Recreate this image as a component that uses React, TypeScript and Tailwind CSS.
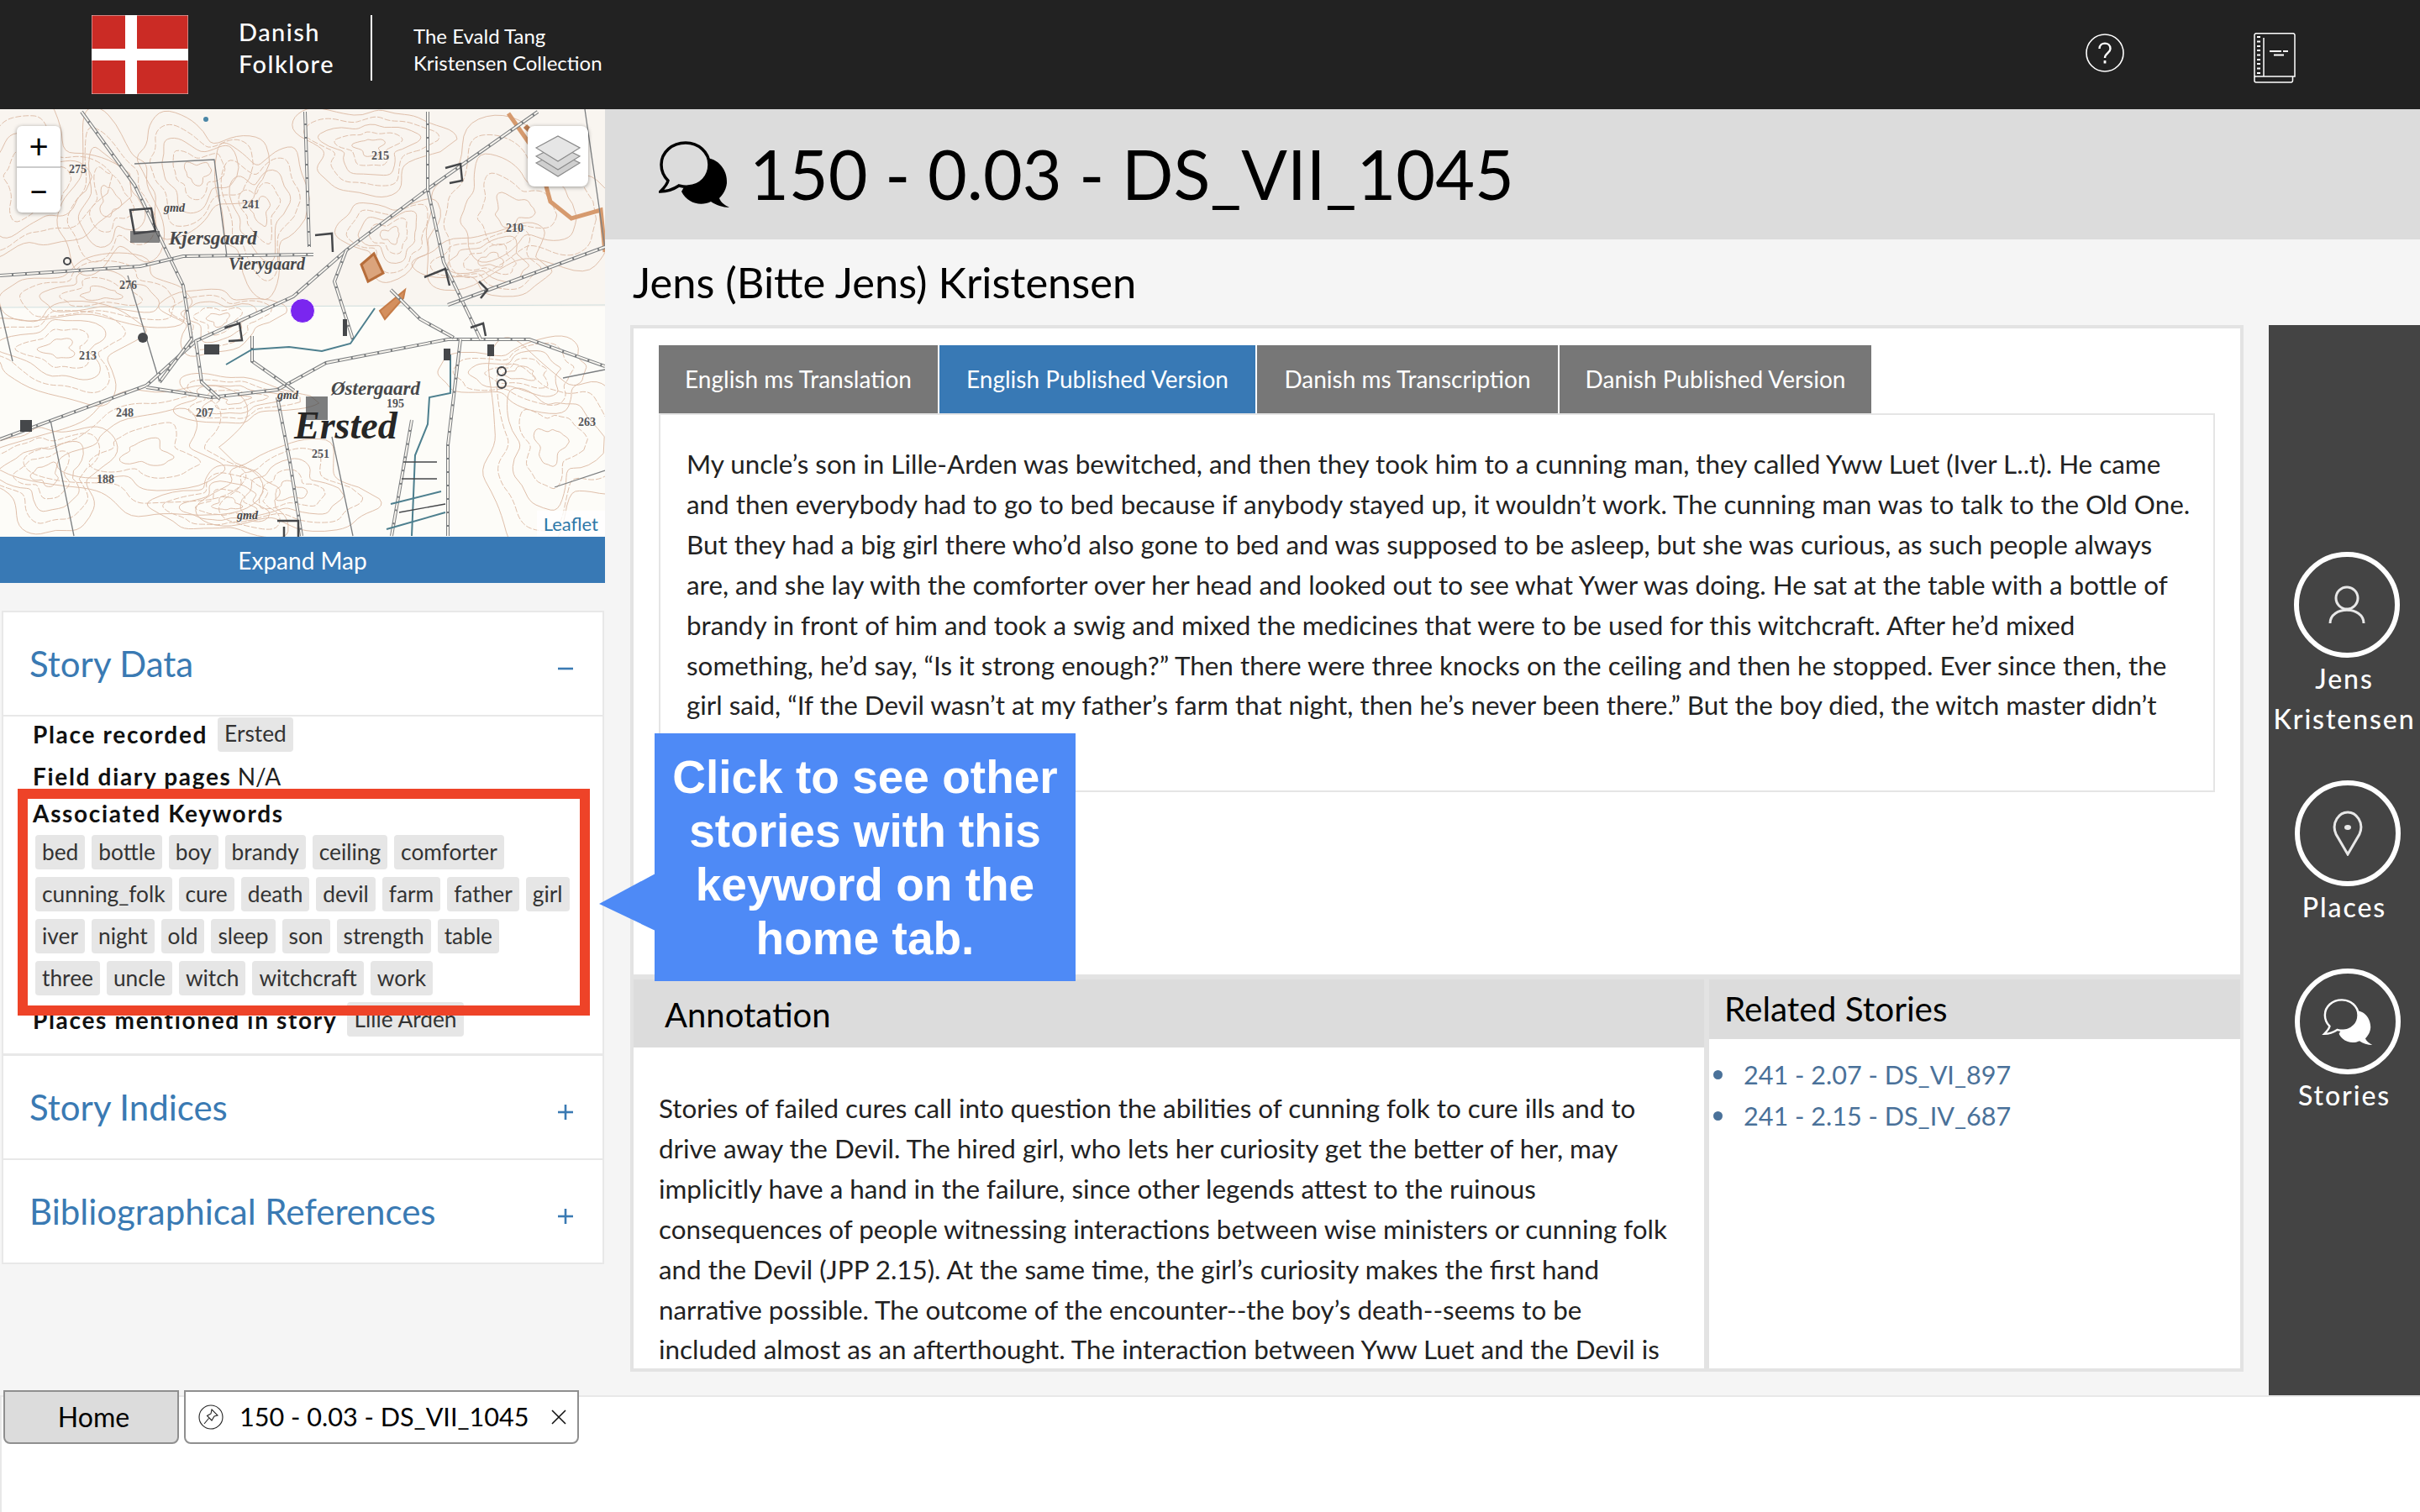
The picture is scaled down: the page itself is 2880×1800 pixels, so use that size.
import { Fragment } from 'react';

const storyLines = [
  'My uncle’s son in Lille-Arden was bewitched, and then they took him to a cunning man, they called Yww Luet (Iver L..t). He came',
  'and then everybody had to go to bed because if anybody stayed up, it wouldn’t work. The cunning man was to talk to the Old One.',
  'But they had a big girl there who’d also gone to bed and was supposed to be asleep, but she was curious, as such people always',
  'are, and she lay with the comforter over her head and looked out to see what Ywer was doing. He sat at the table with a bottle of',
  'brandy in front of him and took a swig and mixed the medicines that were to be used for this witchcraft. After he’d mixed',
  'something, he’d say, “Is it strong enough?” Then there were three knocks on the ceiling and then he stopped. Ever since then, the',
  'girl said, “If the Devil wasn’t at my father’s farm that night, then he’s never been there.” But the boy died, the witch master didn’t',
];

const annotationLines = [
  'Stories of failed cures call into question the abilities of cunning folk to cure ills and to',
  'drive away the Devil. The hired girl, who lets her curiosity get the better of her, may',
  'implicitly have a hand in the failure, since other legends attest to the ruinous',
  'consequences of people witnessing interactions between wise ministers or cunning folk',
  'and the Devil (JPP 2.15). At the same time, the girl’s curiosity makes the first hand',
  'narrative possible. The outcome of the encounter--the boy’s death--seems to be',
  'included almost as an afterthought. The interaction between Yww Luet and the Devil is',
];

const keywordRows = [
  ['bed', 'bottle', 'boy', 'brandy', 'ceiling', 'comforter'],
  ['cunning_folk', 'cure', 'death', 'devil', 'farm', 'father', 'girl'],
  ['iver', 'night', 'old', 'sleep', 'son', 'strength', 'table'],
  ['three', 'uncle', 'witch', 'witchcraft', 'work'],
];

const storyTabs = [
  { label: 'English ms Translation', width: 'w-[332px]', active: false },
  { label: 'English Published Version', width: 'w-[376px]', active: true },
  { label: 'Danish ms Transcription', width: 'w-[358px]', active: false },
  { label: 'Danish Published Version', width: 'w-[371px]', active: false },
];

// wobbly closed contour around a point, same shape every render
const contour = (cx: number, cy: number, rx: number, ry: number, seed: number) => {
  const pts: [number, number][] = [];
  for (let i = 0; i < 22; i++) {
    const a = (i / 22) * Math.PI * 2;
    const w = 1 + 0.26 * Math.sin(a * 3 + seed) + 0.16 * Math.sin(a * 5 + seed * 2.3) + 0.07 * Math.sin(a * 9 + seed);
    pts.push([cx + Math.cos(a) * rx * w, cy + Math.sin(a) * ry * w]);
  }
  let d = '';
  pts.forEach((p, i) => {
    const n = pts[(i + 1) % pts.length];
    const mid = `${((p[0] + n[0]) / 2).toFixed(1)} ${((p[1] + n[1]) / 2).toFixed(1)}`;
    d += i === 0 ? `M${mid}` : ` Q${p[0].toFixed(1)} ${p[1].toFixed(1)} ${mid}`;
  });
  return d + ' Z';
};

const hills = [
  [40, 90, 75, 70, 1],
  [130, 110, 45, 70, 13],
  [235, 75, 60, 50, 2],
  [310, 120, 42, 65, 3],
  [70, 285, 75, 45, 4],
  [120, 220, 90, 30, 12],
  [175, 410, 110, 60, 5],
  [345, 455, 75, 40, 6],
  [280, 345, 60, 22, 14],
  [610, 120, 90, 70, 7],
  [655, 400, 70, 85, 8],
  [440, 45, 65, 40, 9],
  [55, 435, 60, 50, 10],
  [585, 180, 60, 30, 11],
  [260, 250, 50, 30, 15],
  [465, 150, 45, 35, 16],
  [620, 315, 70, 30, 17],
  [270, 470, 60, 30, 18],
];

const rings = [1.25, 1, 0.75, 0.5, 0.25];

const roads = [
  'M0 393 L174 329 L233 276 L349 223 L412 168 L509 95 L640 3',
  'M97 3 L160 90 L218 210 L228 274 L190 325',
  'M174 331 L252 343 L330 334 L388 302 L533 274 L630 274 L720 306',
  'M548 274 L533 400 L533 508',
  'M330 343 L345 420 L359 508',
  'M509 3 L509 95 L528 182 L572 274',
  'M363 3 L368 164',
  'M0 198 L167 187 L218 175 L373 173',
  'M533 233 L720 164',
  'M412 168 L398 205 L420 274',
  'M300 270 L300 300 L350 335',
  'M466 508 L490 370',
  'M233 276 L240 325 L262 345',
  'M465 215 L500 250 L540 272',
];

const thinLines = [
  'M160 65 L255 60 L270 175',
  'M152 198 L190 325',
  'M60 370 L88 508',
  'M395 390 L420 508',
  'M696 0 L720 165',
  'M0 235 L15 300',
  'M660 450 L720 430 M670 320 L720 310',
];

const MapDrawing = () => (
  <svg viewBox="0 0 720 509" className="block w-[720px] h-[509px]">
    <rect width="720" height="235" fill="#f9f5f0" />
    <rect y="235" width="720" height="274" fill="#fdfcf8" />
    <line x1="0" y1="236" x2="720" y2="233" stroke="#cfdedd" />
    {hills.map(([cx, cy, rx, ry, seed]) => (
      <Fragment key={seed}>
        {rings.map((r, i) => (
          <path
            key={r}
            d={contour(cx, cy, rx * r, ry * r, seed + i * 0.25)}
            fill="none"
            stroke="#dfbfaa"
            strokeWidth="1"
            strokeDasharray={i % 2 ? '7 2' : undefined}
          />
        ))}
      </Fragment>
    ))}
    <path d="M605 5 L640 55 L655 110 L680 130 L715 120 L720 170" fill="none" stroke="#d69a6e" strokeWidth="5" />
    <path d="M625 20 L650 45" stroke="#b77a50" strokeWidth="6" />
    <path d="M430 185 L445 172 L456 195 L438 205 Z" fill="#dba47c" stroke="#b76d3a" strokeWidth="3" />
    <path d="M452 240 L482 215 L480 225 L458 250 Z" fill="#d48f5d" stroke="#c67c48" strokeWidth="2" />
    {thinLines.map((d) => <path key={d} d={d} fill="none" stroke="#7b7e80" strokeWidth="1.3" />)}
    {roads.map((d) => (
      <Fragment key={d}>
        <path d={d} fill="none" stroke="#7b7e80" strokeWidth="4" />
        <path d={d} fill="none" stroke="#f7f4ee" strokeWidth="2" strokeDasharray="14 2" />
      </Fragment>
    ))}
    <path d="M269 304 L300 286 L344 283 L383 288 L417 279 L446 237" fill="none" stroke="#4d7f8e" strokeWidth="2" />
    <path d="M490 508 L494 412 L509 375 L511 343 L536 338 L536 292" fill="none" stroke="#4d7f8e" strokeWidth="2" />
    <path d="M460 500 L530 480 M465 470 L525 455" stroke="#4d7f8e" strokeWidth="2" />
    <g fill="none" stroke="#45474a" strokeWidth="2.5">
      <path d="M155 120 L180 118 L185 145 L160 148 Z" />
      <path d="M268 260 L285 255 L288 275 L272 276" />
      <path d="M330 490 L355 490 L355 509 M338 497 L338 509" />
      <path d="M375 150 L395 148 L396 170" />
      <path d="M530 70 L548 65 L550 85 L535 88" />
      <path d="M560 260 L575 255 L578 270" />
      <path d="M505 200 L530 190 L535 210 M570 205 L580 215 L572 225" />
      <path d="M480 420 L520 420 M478 440 L520 440 M475 480 L530 470" strokeWidth="1.4" />
    </g>
    <g fill="#45474a">
      <rect x="155" y="145" width="35" height="14" opacity="0.65" />
      <rect x="364" y="342" width="26" height="28" opacity="0.7" />
      <circle cx="170" cy="272" r="6" />
      <circle cx="245" cy="12" r="3" fill="#4a86a6" />
      <circle cx="80" cy="181" r="4" fill="none" stroke="#45474a" strokeWidth="2" />
      <rect x="24" y="370" width="14" height="14" />
      <circle cx="597" cy="312" r="5" fill="none" stroke="#45474a" strokeWidth="2" />
      <circle cx="597" cy="327" r="5" fill="none" stroke="#45474a" strokeWidth="2" />
      <rect x="243" y="280" width="18" height="12" />
      <rect x="408" y="250" width="5" height="20" />
      <rect x="580" y="280" width="8" height="14" />
      <rect x="528" y="285" width="8" height="14" />
    </g>
    <g fontFamily="'Liberation Serif', serif" fontStyle="italic" fontWeight="700" fill="#47484a">
      <text x="201" y="161" fontSize="23">Kjersgaard</text>
      <text x="272" y="191" fontSize="20">Vierygaard</text>
      <text x="394" y="340" fontSize="23">Østergaard</text>
      <text x="350" y="392" fontSize="46" fill="#262626">Ersted</text>
      <text x="195" y="122" fontSize="14">gmd</text>
      <text x="282" y="488" fontSize="14">gmd</text>
      <text x="330" y="345" fontSize="14">gmd</text>
    </g>
    <g fontFamily="'Liberation Serif', serif" fontWeight="700" fontSize="14" fill="#55565a">
      <text x="82" y="76">275</text>
      <text x="442" y="60">215</text>
      <text x="288" y="118">241</text>
      <text x="142" y="214">276</text>
      <text x="94" y="298">213</text>
      <text x="138" y="366">248</text>
      <text x="233" y="366">207</text>
      <text x="115" y="445">188</text>
      <text x="371" y="415">251</text>
      <text x="460" y="355">195</text>
      <text x="602" y="146">210</text>
      <text x="688" y="377">263</text>
    </g>
  </svg>
);

const Bubbles = ({ className, ink, hole }: { className: string; ink: string; hole: string }) => (
  <svg viewBox="0 0 84 79" className={className}>
    <path d="M50 20 C70 18 82 34 81 50 C80 60 74 66 72 68 C74 73 78 76 84 79 C76 79 68 76 62 72 C50 78 34 74 27 60 Z" fill={ink} />
    <path d="M32 2 C16 2 3 13 3 28 C3 36 7 43 11 47 C10 52 6 56 2 60 C10 60 18 57 24 53 C28 54 31 55 35 54 C50 53 60 42 60 28 C60 13 47 2 32 2 Z" fill={hole} stroke={ink} strokeWidth="3.5" />
  </svg>
);

const Tag = ({ text }: { text: string }) => (
  <span className="flex h-[41px] items-center whitespace-nowrap rounded-[4px] bg-[#e6e6e6] px-2 text-[26.3px] font-normal text-[#333]">{text}</span>
);

const AccordionHead = ({ title, open, height }: { title: string; open: boolean; height: string }) => (
  <div className={`flex items-center justify-between pl-[31px] pr-[34px] text-[#3a7ab3] ${height}`}>
    <h2 className="text-[42px] leading-none">{title}</h2>
    <svg viewBox="0 0 20 20" className="mt-[12px] h-[20px] w-[20px]" stroke="#3a7ab3" strokeWidth="2.6">
      <path d="M1 10 H19" />
      {!open && <path d="M10 1 V19" />}
    </svg>
  </div>
);

const CircleLink = ({ label, children }: { label: string[]; children: React.ReactNode }) => (
  <div className="flex flex-col items-center">
    <div className="ml-[7px] flex h-[126px] w-[126px] items-center justify-center rounded-full border-[6px] border-white">{children}</div>
    {label.map((l) => (
      <span key={l} className="mt-[1px] h-[47px] text-[32px] font-medium leading-[47px] tracking-[0.06em] text-white">{l}</span>
    ))}
  </div>
);

export default function App() {
  return (
    <div className="relative flex h-[1800px] w-[2880px] flex-col overflow-hidden bg-[#f5f5f5] font-[Lato,sans-serif] text-black">
      {/* top bar */}
      <header className="flex h-[130px] flex-none items-center bg-[#222] pl-[109px] pr-[148px] text-white">
        <svg viewBox="0 0 115 94" className="h-[94px] w-[115px] flex-none">
          <rect width="115" height="94" fill="#cb2b25" stroke="#ddd" strokeWidth="1" />
          <rect x="40" width="14" height="94" fill="#fff" />
          <rect y="40" width="115" height="14" fill="#fff" />
        </svg>
        <div className="mb-[16px] ml-[60px] text-[29px] font-medium leading-[38px] tracking-[0.05em]">
          <div>Danish</div>
          <div>Folklore</div>
        </div>
        <div className="mb-[16px] ml-[43px] h-[78px] w-[2px] bg-white" />
        <div className="mb-[12px] ml-[49px] text-[24px] leading-[32px]">
          <div>The Evald Tang</div>
          <div>Kristensen Collection</div>
        </div>
        <svg viewBox="0 0 46 46" className="mb-[4px] ml-auto h-[46px] w-[46px]" fill="none" stroke="#fff">
          <circle cx="23" cy="23" r="22" strokeWidth="1.6" />
          <path d="M16.5 18 C16.5 9.500 29.500 9.500 29.500 18 C29.500 23 23 23.500 23 29" strokeWidth="2.4" />
          <path d="M23 32 V35.500" strokeWidth="2.8" />
        </svg>
        <svg viewBox="0 0 50 60" className="ml-[154px] mt-[8px] h-[60px] w-[50px]" fill="none" stroke="#fff" strokeWidth="1.5">
          <path d="M3 0.800 H47 A2 2 0 0 1 49 3 V52 H2 A1.500 1.500 0 0 0 1 53 V3 A2 2 0 0 1 3 0.800 Z" />
          <path d="M1 53 V57 A2 2 0 0 0 3 59 H45 A2 2 0 0 0 46.500 57 V52" />
          <path d="M12 6 V52" />
          <path d="M4 5 H8 M4 10.500 H8 M4 16 H8 M4 21 H8 M4 26.500 H8 M4 32 H8 M4 37 H8 M4 42.500 H8 M4 48 H8" strokeWidth="2" />
          <path d="M19 22 H33 M35 22 H41 M24 26.500 H36" strokeWidth="2" />
        </svg>
      </header>

      <div className="flex min-h-0 flex-1">
        {/* left column */}
        <aside className="w-[720px] flex-none">
          <div className="relative h-[509px] overflow-hidden">
            <MapDrawing />
            <div className="absolute left-[20px] top-[20px] flex h-[103px] w-[52px] flex-col rounded-[6px] bg-white text-black shadow-[0_1px_5px_rgba(0,0,0,0.4)]">
              <span className="flex h-[50px] items-center justify-center border-b-2 border-[#ccc] text-[40px] leading-none">+</span>
              <span className="flex flex-1 items-center justify-center text-[40px] leading-none">−</span>
            </div>
            <div className="absolute left-[628px] top-[20px] flex h-[72px] w-[72px] items-center justify-center rounded-[8px] bg-white shadow-[0_1px_5px_rgba(0,0,0,0.4)]">
              <svg viewBox="0 0 54 52" className="h-[52px] w-[54px]" stroke="#8a8a8a" strokeWidth="1.2">
                <path d="M1 34 L27 21 L53 34 L27 50 Z" fill="#cfcfcf" />
                <path d="M1 26 L27 13 L53 26 L27 42 Z" fill="#d8d8d8" />
                <path d="M1 16 L27 2 L53 16 L27 32 Z" fill="#e6e6e6" />
              </svg>
            </div>
            <span className="absolute left-[345px] top-[225px] h-[30px] w-[30px] rounded-full border border-white bg-[#7a26ef]" />
            <span className="absolute bottom-0 right-0 bg-white/80 px-[8px] text-[22px] leading-[31px] text-[#2d78a8]">Leaflet</span>
          </div>
          <div className="flex h-[55px] items-center justify-center bg-[#3879b5] text-[28px] text-white">Expand Map</div>

          <section className="ml-[2px] mt-[33px] w-[717px] border-2 border-[#e8e8e8] bg-white">
            <AccordionHead title="Story Data" open height="h-[122px]" />
            <div className="h-[406px] border-b-[3px] border-t-2 border-[#e8e8e8] pl-[35px] text-[28px] text-[#222]">
              <div className="flex h-[42px] items-center">
                <b className="tracking-[0.06em] text-[#111]">Place recorded</b>
                <span className="ml-[12px]"><Tag text="Ersted" /></span>
              </div>
              <div className="mt-[3px] flex h-[52px] items-center">
                <span><b className="tracking-[0.06em] text-[#111]">Field diary pages</b> N/A</span>
              </div>
              <div className="flex h-[36px] items-center"><b className="tracking-[0.06em] text-[#111]">Associated Keywords</b></div>
              <div className="ml-[3px] mt-[8px] flex flex-col gap-[9px]">
                {keywordRows.map((row) => (
                  <div key={row[0]} className="flex gap-[8px]">
                    {row.map((k) => <Tag key={k} text={k} />)}
                  </div>
                ))}
              </div>
              <div className="mt-[8px] flex h-[41px] items-center">
                <b className="tracking-[0.06em] text-[#111]">Places mentioned in story</b>
                <span className="ml-[12px]"><Tag text="Lille Arden" /></span>
              </div>
            </div>
            <AccordionHead title="Story Indices" open={false} height="h-[122px]" />
            <div className="border-t-2 border-[#e8e8e8]">
              <AccordionHead title="Bibliographical References" open={false} height="h-[122px]" />
            </div>
          </section>
        </aside>

        {/* story */}
        <main className="flex min-w-0 flex-1 flex-col">
          <div className="flex h-[155px] flex-none items-center bg-[#dcdcdc] pl-[64px]">
            <Bubbles className="h-[79px] w-[84px]" ink="#000" hole="#dcdcdc" />
            <h1 className="ml-[24px] text-[80.8px] leading-none">150 - 0.03 - DS_VII_1045</h1>
          </div>
          <div className="flex h-[102px] flex-none items-center pl-[33px] text-[50.6px]">Jens (Bitte Jens) Kristensen</div>

          <div className="flex min-h-0 flex-1 pl-[30px]">
            <div className="mb-[28px] flex w-[1920px] flex-none flex-col border-4 border-[#e3e3e3] bg-[#e3e3e3]">
              <div className="h-[769px] flex-none bg-white pl-[30px] pr-[30px] pt-[20px]">
                <div className="flex gap-[2px]">
                  {storyTabs.map((t) => (
                    <div key={t.label} className={`flex h-[81px] items-center justify-center pb-[2px] text-[28px] text-white ${t.width} ${t.active ? 'bg-[#3879b5]' : 'bg-[#777]'}`}>
                      {t.label}
                    </div>
                  ))}
                </div>
                <div className="h-[451px] border-2 border-[#e5e5e5] pl-[31px] pt-[35px] text-[31.4px] leading-[47.9px] text-[#222]">
                  {storyLines.map((l) => <div key={l} className="whitespace-nowrap">{l}</div>)}
                </div>
              </div>
              <div className="flex min-h-0 flex-1 gap-[6px] pt-[6px]">
                <div className="flex w-[1274px] flex-none flex-col overflow-hidden bg-white">
                  <div className="flex h-[81px] flex-none items-center bg-[#dcdcdc] pl-[37px] pt-[2px] text-[40px]">Annotation</div>
                  <div className="pl-[30px] pt-[49px] text-[31.4px] leading-[47.9px] text-[#222]">
                    {annotationLines.map((l) => <div key={l} className="whitespace-nowrap">{l}</div>)}
                  </div>
                </div>
                <div className="flex-1 bg-white">
                  <div className="flex h-[71px] items-center bg-[#dcdcdc] pl-[18px] text-[40.5px]">Related Stories</div>
                  <ul className="pt-[18px] text-[30.6px] leading-[49px] text-[#4a7199]">
                    {['241 - 2.07 - DS_VI_897', '241 - 2.15 - DS_IV_687'].map((s) => (
                      <li key={s} className="flex items-center pl-[5px]">
                        <span className="h-[11px] w-[11px] rounded-full bg-[#4a7199]" />
                        <span className="ml-[25px]">{s}</span>
                      </li>
                    ))}
                  </ul>
                </div>
              </div>
            </div>

            <nav className="ml-[30px] flex flex-1 flex-col items-center bg-[#444] pt-[270px]">
              <CircleLink label={['Jens', 'Kristensen']}>
                <svg viewBox="0 0 44 46" className="h-[46px] w-[44px]" fill="none" stroke="#e8e8e8" strokeWidth="3">
                  <circle cx="22" cy="15" r="13" />
                  <path d="M2 45 C2 24 42 24 42 45" />
                </svg>
              </CircleLink>
              <div className="mt-[50px]">
                <CircleLink label={['Places']}>
                  <svg viewBox="0 0 36 54" className="h-[54px] w-[36px]" fill="none" stroke="#e8e8e8" strokeWidth="3">
                    <path d="M18 52 L4 28 C-2 14 8 2 18 2 C28 2 38 14 32 28 Z" />
                    <ellipse cx="18" cy="20" rx="4" ry="3" fill="#e8e8e8" stroke="none" />
                  </svg>
                </CircleLink>
              </div>
              <div className="mt-[50px]">
                <CircleLink label={['Stories']}>
                  <Bubbles className="h-[55px] w-[62px]" ink="#fff" hole="#444" />
                </CircleLink>
              </div>
            </nav>
          </div>
        </main>
      </div>

      {/* open tabs */}
      <footer className="h-[139px] flex-none border-l-2 border-t-2 border-[#e8e8e8] bg-white pl-[2px]">
        <div className="relative -mt-[8px] flex gap-[6px] text-[30.6px]">
          <div className="flex h-[64px] w-[209px] items-center justify-center rounded-b-[8px] border-2 border-[#8f8f8f] bg-[#dcdcdc] pl-[6px] text-[32px]">Home</div>
          <div className="flex h-[64px] w-[470px] items-center rounded-b-[8px] border-2 border-[#8f8f8f] bg-white pl-[15px]">
            <svg viewBox="0 0 30 30" className="h-[30px] w-[30px] flex-none" fill="none" stroke="#222" strokeWidth="1.1">
              <circle cx="15" cy="15" r="14" />
              <path d="M16 6 L23 13 L19 14 L16 19 L10.500 13.500 L15 11 Z M12.500 16.500 L7 23" />
            </svg>
            <span className="ml-[19px] whitespace-nowrap">150 - 0.03 - DS_VII_1045</span>
            <svg viewBox="0 0 18 18" className="ml-[26px] h-[18px] w-[18px] flex-none" stroke="#111" strokeWidth="1.6">
              <path d="M1 1 L17 17 M17 1 L1 17" />
            </svg>
          </div>
        </div>
      </footer>

      {/* annotation layered on the screenshot: highlight and callout */}
      <div className="absolute left-[21px] top-[939px] h-[270px] w-[681px] border-[12px] border-[#ee4328]" />
      <div className="absolute left-[779px] top-[873px] flex h-[295px] w-[501px] items-center justify-center bg-[#4e8af6] text-center font-['Liberation_Sans',sans-serif] text-[55px] font-bold leading-[64px] text-white">
        <span>Click to see other<br />stories with this<br />keyword on the<br />home tab.</span>
      </div>
      <svg viewBox="0 0 67 68" className="absolute left-[713px] top-[1040px] h-[68px] w-[67px]">
        <path d="M0 36 L67 0 V68 Z" fill="#4e8af6" />
      </svg>
    </div>
  );
}
